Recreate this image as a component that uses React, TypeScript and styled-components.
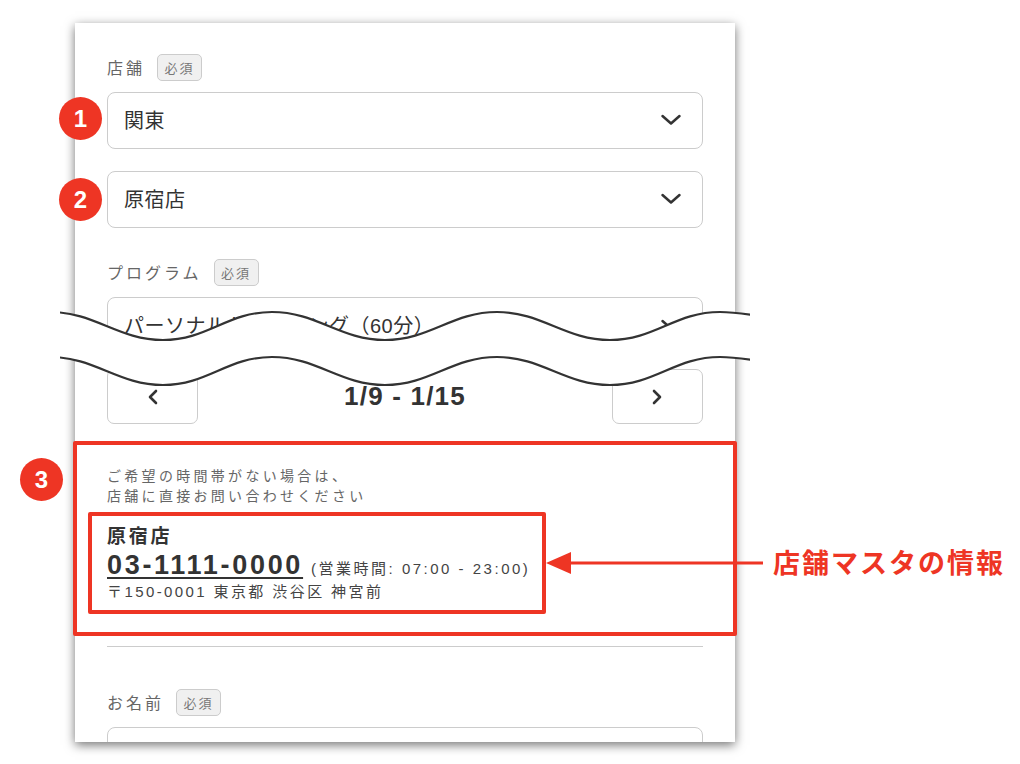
import styled, { createGlobalStyle } from "styled-components";

const RED = "#ee3524";

const GlobalStyle = createGlobalStyle`
  html, body {
    margin: 0;
    background: #fff;
  }

  body {
    font-family: "Liberation Sans", "Noto Sans CJK JP", sans-serif;
    color: #333;
  }

  * {
    box-sizing: border-box;
  }
`;

const Chevron: React.FC<{ dir: "down" | "left" | "right" }> = ({ dir }) => {
  if (dir === "down") {
    return (
      <svg width="22" height="14" viewBox="0 0 22 14" fill="none">
        <path d="M2.5 3 L11 10.5 L19.5 3" stroke="#333" strokeWidth="2.5" strokeLinecap="round" strokeLinejoin="round" />
      </svg>
    );
  }
  return (
    <svg width="12" height="16" viewBox="0 0 12 16" fill="none">
      <path
        d={dir === "left" ? "M9 2 L3 8 L9 14" : "M3 2 L9 8 L3 14"}
        stroke="#333"
        strokeWidth="2.6"
        strokeLinecap="round"
        strokeLinejoin="round"
      />
    </svg>
  );
};

const wave = (offset: number) =>
  [
    `M50 ${312 + offset}`,
    `C95 ${312 + offset} 118 ${340 + offset} 163 ${340 + offset}`,
    `C208 ${340 + offset} 227 ${312 + offset} 272 ${312 + offset}`,
    `C317 ${312 + offset} 340 ${340 + offset} 385 ${340 + offset}`,
    `C430 ${340 + offset} 452 ${312 + offset} 497 ${312 + offset}`,
    `C542 ${312 + offset} 565 ${340 + offset} 610 ${340 + offset}`,
    `C655 ${340 + offset} 675 ${312 + offset} 720 ${312 + offset}`,
    `C735 ${312 + offset} 745 ${314 + offset} 760 ${316 + offset}`,
  ].join(" ");

const WaveBreak = () => (
  <BreakSvg viewBox="60 300 690 100">
    <path
      d={`${wave(0)} L760 361 C745 359 735 357 720 357 C675 357 655 385 610 385 C565 385 542 357 497 357 C452 357 430 385 385 385 C340 385 317 357 272 357 C227 357 208 385 163 385 C118 385 95 357 50 357 Z`}
      fill="#fff"
    />
    <path d={wave(0)} fill="none" stroke="#333" strokeWidth="2.2" />
    <path d={wave(45)} fill="none" stroke="#333" strokeWidth="2.2" />
  </BreakSvg>
);

const Required = () => <RequiredTag>必須</RequiredTag>;

const App = () => {
  return (
    <Page>
      <GlobalStyle />
      <Card>
        <LabelRow>
          <Label>店舗</Label>
          <Required />
        </LabelRow>
        <Select $mt={11}>
          <StepBadge $top={4}>1</StepBadge>
          <span>関東</span>
          <Chevron dir="down" />
        </Select>
        <Select $mt={22}>
          <StepBadge $top={6}>2</StepBadge>
          <span>原宿店</span>
          <Chevron dir="down" />
        </Select>

        <LabelRow $mt={31}>
          <Label>プログラム</Label>
          <Required />
        </LabelRow>
        <Select $mt={11}>
          <span>パーソナルトレーニング（60分）</span>
          <Chevron dir="down" />
        </Select>

        <Pager>
          <PagerButton>
            <Chevron dir="left" />
          </PagerButton>
          <PagerTitle>1/9 - 1/15</PagerTitle>
          <PagerButton>
            <Chevron dir="right" />
          </PagerButton>
        </Pager>

        <NoticeFrame>
          <StepBadge $left={-57} $top={13}>3</StepBadge>
          <NoticeText>
            ご希望の時間帯がない場合は、
            <br />
            店舗に直接お問い合わせください
          </NoticeText>
          <StoreFrame>
            <StoreName>原宿店</StoreName>
            <PhoneRow>
              <Phone>03-1111-0000</Phone>
              <Hours>(営業時間: 07:00 - 23:00)</Hours>
            </PhoneRow>
            <Address>〒150-0001 東京都 渋谷区 神宮前</Address>
            <Callout>
              <svg width="217" height="24" viewBox="0 0 217 24">
                <path d="M0 12 L25 1 L25 23 Z" fill={RED} />
                <rect x="24" y="10.5" width="193" height="3" fill={RED} />
              </svg>
              <CalloutText>店舗マスタの情報</CalloutText>
            </Callout>
          </StoreFrame>
        </NoticeFrame>

        <Divider />

        <LabelRow $mt={42}>
          <Label>お名前</Label>
          <Required />
        </LabelRow>
        <ClippedField>
          <Select $mt={0} />
        </ClippedField>
      </Card>
      <WaveBreak />
    </Page>
  );
};

export default App;

const Page = styled.div`
  position: relative;
  width: 1020px;
  height: 764px;
  padding: 23px 0 0 75px;
  overflow: hidden;
`;

const Card = styled.main`
  width: 660px;
  height: 719px;
  padding: 31px 32px 0;
  background: #fff;
  box-shadow: 0 3px 10px rgba(0, 0, 0, 0.55);
`;

const LabelRow = styled.div<{ $mt?: number }>`
  display: flex;
  align-items: center;
  gap: 12px;
  height: 27px;
  margin-top: ${(p) => p.$mt ?? 0}px;
`;

const Label = styled.span`
  margin-top: -2px;
  font-size: 16px;
  letter-spacing: 3px;
  color: #666;
`;

const RequiredTag = styled.span`
  display: flex;
  align-items: center;
  justify-content: center;
  width: 45px;
  height: 27px;
  font-size: 13px;
  letter-spacing: 2px;
  color: #777;
  background: #f0f0f0;
  border: 1.5px solid #ccc;
  border-radius: 5px;
`;

const Select = styled.div<{ $mt: number }>`
  position: relative;
  display: flex;
  align-items: center;
  justify-content: space-between;
  height: 57px;
  margin-top: ${(p) => p.$mt}px;
  padding: 0 20px 2px 16px;
  font-size: 20px;
  letter-spacing: 0.5px;
  color: #333;
  background: #fff;
  border: 1.5px solid #ccc;
  border-radius: 8px;
`;

const StepBadge = styled.span<{ $left?: number; $top: number }>`
  position: absolute;
  left: ${(p) => p.$left ?? -49}px;
  top: ${(p) => p.$top}px;
  display: flex;
  align-items: center;
  justify-content: center;
  width: 43px;
  height: 43px;
  font-size: 24px;
  font-weight: 700;
  letter-spacing: 0;
  color: #fff;
  background: ${RED};
  border-radius: 50%;
`;

const Pager = styled.div`
  display: flex;
  align-items: center;
  justify-content: space-between;
  height: 55px;
  margin-top: 15px;
`;

const PagerButton = styled.div`
  display: flex;
  align-items: center;
  justify-content: center;
  width: 91px;
  height: 55px;
  background: #fff;
  border: 1.5px solid #ccc;
  border-radius: 7px;
`;

const PagerTitle = styled.div`
  font-size: 26px;
  font-weight: 700;
  letter-spacing: 1.2px;
  color: #333;
`;

const NoticeFrame = styled.section`
  position: relative;
  width: 664px;
  height: 195px;
  margin: 17px 0 0 -34px;
  padding: 21px 0 0 11px;
  border: 4px solid ${RED};
  border-radius: 2px;
`;

const NoticeText = styled.p`
  margin: 0 0 0 19px;
  font-size: 14px;
  line-height: 20px;
  letter-spacing: 3.3px;
  color: #666;
`;

const StoreFrame = styled.div`
  position: relative;
  width: 458px;
  height: 102px;
  margin-top: 6px;
  padding: 7px 0 0 15px;
  border: 4px solid ${RED};
  border-radius: 2px;
`;

const StoreName = styled.div`
  height: 28px;
  font-size: 19px;
  line-height: 28px;
  font-weight: 700;
  letter-spacing: 2.7px;
  color: #333;
`;

const PhoneRow = styled.div`
  display: flex;
  align-items: baseline;
  gap: 8px;
  height: 27px;
  line-height: 28px;
`;

const Phone = styled.span`
  font-size: 27px;
  font-weight: 700;
  letter-spacing: 2.7px;
  color: #333;
  text-decoration: underline;
  text-underline-offset: 3px;
`;

const Hours = styled.span`
  font-size: 15px;
  letter-spacing: 2.5px;
  white-space: nowrap;
  color: #444;
`;

const Address = styled.div`
  height: 28px;
  font-size: 15px;
  line-height: 28px;
  letter-spacing: 2.4px;
  color: #444;
`;

const Callout = styled.div`
  position: absolute;
  left: calc(100% + 4px);
  top: 50%;
  transform: translateY(-50%);
  display: flex;
  align-items: center;
  gap: 10px;
`;

const CalloutText = styled.span`
  margin-top: -3px;
  font-size: 27px;
  font-weight: 700;
  letter-spacing: 2px;
  white-space: nowrap;
  color: ${RED};
`;

const Divider = styled.hr`
  height: 1px;
  margin: 10px 0 0;
  border: 0;
  background: #ccc;
`;

const ClippedField = styled.div`
  height: 15px;
  margin-top: 11px;
  overflow: hidden;
`;

const BreakSvg = styled.svg`
  position: absolute;
  left: 60px;
  top: 300px;
  width: 690px;
  height: 100px;
`;
